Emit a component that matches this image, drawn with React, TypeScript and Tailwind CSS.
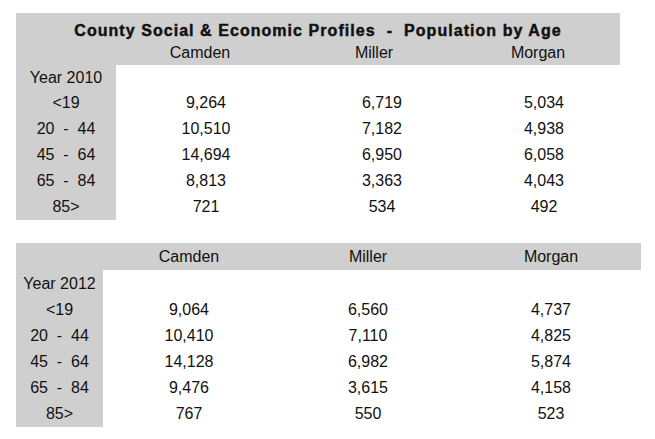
import React from "react";

const t1 = [
  ["<19", "9,264", "6,719", "5,034"],
  ["20  -  44", "10,510", "7,182", "4,938"],
  ["45  -  64", "14,694", "6,950", "6,058"],
  ["65  -  84", "8,813", "3,363", "4,043"],
  ["85>", "721", "534", "492"],
];
const t2 = [
  ["<19", "9,064", "6,560", "4,737"],
  ["20  -  44", "10,410", "7,110", "4,825"],
  ["45  -  64", "14,128", "6,982", "5,874"],
  ["65  -  84", "9,476", "3,615", "4,158"],
  ["85>", "767", "550", "523"],
];

export default function App() {
  return (
    <div
      className="w-[655px] h-[439px] bg-white text-[#111] text-[16px] leading-[22px] pt-[13px] pl-[16px] whitespace-pre"
      style={{ fontFamily: '"Liberation Sans", Arial, sans-serif' }}
    >
      {/* Table 1 */}
      <div className="w-[604px]">
        <div className="bg-[#cfcfcf] pt-[7px] pb-[1px]">
          <div className="text-center font-bold tracking-[1.05px] [-webkit-text-stroke:0.45px_#111]">County Social &amp; Economic Profiles  -  Population by Age</div>
          <div className="grid grid-cols-[100px_180px_172px_152px]">
            <div />
            <div className="text-center pr-3">Camden</div>
            <div className="text-center pr-4">Miller</div>
            <div className="text-center pr-3">Morgan</div>
          </div>
        </div>
        <div className="grid grid-cols-[100px_180px_172px_152px]">
          <div className="bg-[#cfcfcf] h-[25px] flex items-center justify-center">Year 2010</div>
          <div className="col-span-3" />
          {t1.map((r) => (
            <React.Fragment key={r[0]}>
              <div className="bg-[#cfcfcf] h-[26px] flex items-center justify-center">{r[0]}</div>
              <div className="h-[26px] flex items-center justify-center">{r[1]}</div>
              <div className="h-[26px] flex items-center justify-center">{r[2]}</div>
              <div className="h-[26px] flex items-center justify-center">{r[3]}</div>
            </React.Fragment>
          ))}
        </div>
      </div>

      {/* Table 2 */}
      <div className="w-[625px] mt-[23px]">
        <div className="bg-[#cfcfcf] h-[27px] grid grid-cols-[87px_172px_186px_180px] items-center">
          <div />
          <div className="text-center">Camden</div>
          <div className="text-center">Miller</div>
          <div className="text-center">Morgan</div>
        </div>
        <div className="grid grid-cols-[87px_172px_186px_180px]">
          <div className="bg-[#cfcfcf] h-[27px] flex items-center justify-center">Year 2012</div>
          <div className="col-span-3" />
          {t2.map((r) => (
            <React.Fragment key={r[0]}>
              <div className="bg-[#cfcfcf] h-[26px] flex items-center justify-center">{r[0]}</div>
              <div className="h-[26px] flex items-center justify-center">{r[1]}</div>
              <div className="h-[26px] flex items-center justify-center">{r[2]}</div>
              <div className="h-[26px] flex items-center justify-center">{r[3]}</div>
            </React.Fragment>
          ))}
        </div>
      </div>
    </div>
  );
}
